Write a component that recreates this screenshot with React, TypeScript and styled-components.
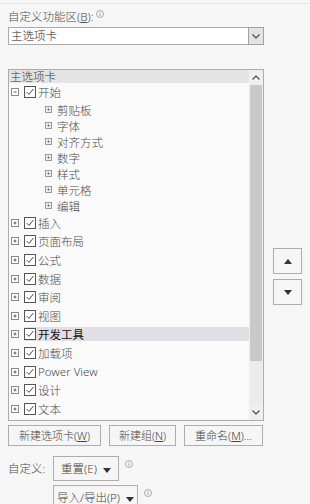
import React from "react";
import styled, { createGlobalStyle } from "styled-components";

const GlobalStyle = createGlobalStyle`
  html, body {
    margin: 0;
    padding: 0;
    background: #f6f6f6;
  }
  body {
    font-family: "Noto Sans", "Noto Sans CJK SC", sans-serif;
    font-size: 11.5px;
    font-weight: 300;
    color: #4a4a4a;
    overflow: hidden;
  }
`;

type TabItem = {
  name: string;
  open?: boolean;
  active?: boolean;
  children?: string[];
};

const tabs: TabItem[] = [
  {
    name: "开始",
    open: true,
    children: ["剪贴板", "字体", "对齐方式", "数字", "样式", "单元格", "编辑"],
  },
  { name: "插入" },
  { name: "页面布局" },
  { name: "公式" },
  { name: "数据" },
  { name: "审阅" },
  { name: "视图" },
  { name: "开发工具", active: true },
  { name: "加载项" },
  { name: "Power View" },
  { name: "设计" },
  { name: "文本" },
  { name: "排列" },
];

const InfoIcon = () => (
  <InfoSvg width="8" height="8" viewBox="0 0 8 8">
    <circle cx="4" cy="4" r="3.5" fill="none" stroke="#9a9a9a" strokeWidth="0.8" />
    <line x1="4" y1="3.4" x2="4" y2="6" stroke="#9a9a9a" strokeWidth="0.9" />
    <circle cx="4" cy="2.2" r="0.5" fill="#9a9a9a" />
  </InfoSvg>
);

const Expander = ({ open, small }: { open?: boolean; small?: boolean }) => (
  <ExpBox $small={small}>
    <svg width="100%" height="100%" viewBox="0 0 8 8">
      <line x1="2" y1="4" x2="6" y2="4" stroke={small ? "#555" : "#333"} strokeWidth="1" />
      {!open && <line x1="4" y1="2" x2="4" y2="6" stroke={small ? "#555" : "#333"} strokeWidth="1" />}
    </svg>
  </ExpBox>
);

const Check = () => (
  <CheckBox>
    <svg width="10" height="10" viewBox="0 0 10 10">
      <polyline points="1.8,5.2 4,7.4 8.4,2" fill="none" stroke="#333" strokeWidth="0.9" />
    </svg>
  </CheckBox>
);

const Caret = ({ up }: { up?: boolean }) => (
  <svg width="8" height="5" viewBox="0 0 8 5">
    <polygon points={up ? "0,5 8,5 4,0" : "0,0 8,0 4,5"} fill="#333" />
  </svg>
);

const Chevron = ({ up }: { up?: boolean }) => (
  <svg width="8" height="5" viewBox="0 0 8 5">
    <polyline points={up ? "0.5,4.5 4,1 7.5,4.5" : "0.5,0.5 4,4 7.5,0.5"} fill="none" stroke="#444" strokeWidth="1.1" />
  </svg>
);

const App = () => {
  return (
    <>
      <GlobalStyle />
      <Page>
        <Label>
          自定义功能区(<u>B</u>):<InfoIcon />
        </Label>
        <Select>
          <SelectText>主选项卡</SelectText>
          <SelectButton>
            <Chevron />
          </SelectButton>
        </Select>

        <ListRow>
          <ListBox>
            <ListContent>
              <Header>主选项卡</Header>
              {tabs.map((t) => (
                <React.Fragment key={t.name}>
                  <TabRow>
                    <Expander open={t.open} />
                    <TabLabel $active={t.active}>
                      <Check />
                      <TabText $active={t.active}>{t.name}</TabText>
                    </TabLabel>
                  </TabRow>
                  {t.open &&
                    t.children?.map((c) => (
                      <SubRow key={c}>
                        <Expander small />
                        <span>{c}</span>
                      </SubRow>
                    ))}
                </React.Fragment>
              ))}
            </ListContent>
            <ScrollBar>
              <ScrollArrow>
                <Chevron up />
              </ScrollArrow>
              <Thumb />
              <Track />
              <ScrollArrow>
                <Chevron />
              </ScrollArrow>
            </ScrollBar>
          </ListBox>
          <MoveButtons>
            <MoveButton>
              <Caret up />
            </MoveButton>
            <MoveButton>
              <Caret />
            </MoveButton>
          </MoveButtons>
        </ListRow>

        <ButtonRow>
          <Button $w={93}>新建选项卡(<u>W</u>)</Button>
          <Button $w={67}>新建组(<u>N</u>)</Button>
          <Button $w={79}>重命名(<u>M</u>)...</Button>
        </ButtonRow>

        <CustomRow>
          <CustomLabel>自定义:</CustomLabel>
          <Stack>
            <MenuLine>
              <MenuButton $w={66}>
                重置(E) <Caret />
              </MenuButton>
              <InfoIcon />
            </MenuLine>
            <MenuLine>
              <MenuButton $w={85}>
                导入/导出(P) <Caret />
              </MenuButton>
              <InfoIcon />
            </MenuLine>
          </Stack>
        </CustomRow>
      </Page>
    </>
  );
};

export default App;

const Page = styled.div`
  width: 310px;
  height: 504px;
  box-sizing: border-box;
  margin-top: 3px;
  border-top: 1px solid #e6e6e6;
  padding: 5px 0 0 8px;
  overflow: hidden;
`;

const Label = styled.div`
  display: flex;
  align-items: flex-start;
  height: 18px;
  line-height: 16px;
`;

const InfoSvg = styled.svg`
  margin-left: 2px;
  margin-top: 1px;
  flex: none;
`;

const Select = styled.div`
  width: 256px;
  height: 18px;
  box-sizing: border-box;
  border: 1px solid #ababab;
  background: #fff;
  display: flex;
  align-items: center;
`;

const SelectText = styled.div`
  flex: 1;
  padding-left: 2px;
  color: #222;
  line-height: 16px;
`;

const SelectButton = styled.div`
  width: 16px;
  height: 18px;
  margin: -1px -1px -1px 0;
  box-sizing: border-box;
  border: 1px solid #a0a0a0;
  background: #e3e3e3;
  display: flex;
  align-items: center;
  justify-content: center;
`;

const ListRow = styled.div`
  display: flex;
  margin-top: 24px;
`;

const ListBox = styled.div`
  width: 256px;
  height: 352px;
  box-sizing: border-box;
  border: 1px solid #ababab;
  background: #fafafa;
  display: flex;
  overflow: hidden;
`;

const ListContent = styled.div`
  flex: 1;
  overflow: hidden;
`;

const Header = styled.div`
  height: 13px;
  line-height: 13px;
  background: #e4e4e4;
  color: #333;
  padding-left: 1px;
`;

const TabRow = styled.div`
  height: 18.6px;
  display: flex;
  align-items: center;
  padding-left: 2px;
`;

const ExpBox = styled.div<{ $small?: boolean }>`
  width: ${(p) => (p.$small ? 7 : 8)}px;
  height: ${(p) => (p.$small ? 7 : 8)}px;
  box-sizing: border-box;
  border: 1px solid ${(p) => (p.$small ? "#9a9a9a" : "#8a8a8a")};
  background: ${(p) => (p.$small ? "#eee" : "#fff")};
  flex: none;
  display: flex;
`;

const TabLabel = styled.div<{ $active?: boolean }>`
  flex: 1;
  margin-left: 5px;
  height: 14px;
  display: flex;
  align-items: center;
  background: ${(p) => (p.$active ? "#e1dfe5" : "transparent")};
`;

const CheckBox = styled.div`
  width: 12px;
  height: 12px;
  box-sizing: border-box;
  border: 1px solid #555;
  background: #fff;
  display: flex;
  align-items: center;
  justify-content: center;
  flex: none;
`;

const TabText = styled.span<{ $active?: boolean }>`
  margin-left: 2px;
  color: ${(p) => (p.$active ? "#111" : "#4a4a4a")};
  font-weight: ${(p) => (p.$active ? 400 : 300)};
  white-space: nowrap;
`;

const SubRow = styled.div`
  height: 16px;
  display: flex;
  align-items: center;
  gap: 5px;
  padding-left: 36px;
`;

const ScrollBar = styled.div`
  width: 14px;
  display: flex;
  flex-direction: column;
  background: #efefef;
`;

const ScrollArrow = styled.div`
  height: 15px;
  display: flex;
  align-items: center;
  justify-content: center;
  flex: none;
`;

const Thumb = styled.div`
  height: 276px;
  margin: 0 1px;
  background: #c9c9c9;
  flex: none;
`;

const Track = styled.div`
  flex: 1;
  margin: 0 1px;
  background: #ebebeb;
`;

const MoveButtons = styled.div`
  display: flex;
  flex-direction: column;
  gap: 5px;
  margin-left: 9px;
  padding-top: 179px;
`;

const MoveButton = styled.div`
  width: 29px;
  height: 26px;
  box-sizing: border-box;
  border: 1px solid #acacac;
  background: #f6f6f6;
  display: flex;
  align-items: center;
  justify-content: center;
`;

const ButtonRow = styled.div`
  display: flex;
  gap: 8px;
  margin-top: 4px;
`;

const Button = styled.div<{ $w: number }>`
  width: ${(p) => p.$w}px;
  height: 21px;
  box-sizing: border-box;
  border: 1px solid #adadad;
  background: #f6f6f6;
  display: flex;
  align-items: center;
  justify-content: center;
  font-size: 11px;
  line-height: 14px;
  color: #444;
  white-space: nowrap;
`;

const CustomRow = styled.div`
  display: flex;
  margin-top: 10px;
`;

const CustomLabel = styled.div`
  width: 45px;
  padding-top: 4px;
`;

const Stack = styled.div`
  display: flex;
  flex-direction: column;
  gap: 4px;
`;

const MenuLine = styled.div`
  display: flex;
  align-items: flex-start;
  gap: 4px;
  svg:last-child {
    margin-top: 4px;
  }
`;

const MenuButton = styled.div<{ $w: number }>`
  width: ${(p) => p.$w}px;
  height: 25px;
  box-sizing: border-box;
  border: 1px solid #adadad;
  background: #f6f6f6;
  display: flex;
  align-items: center;
  justify-content: center;
  gap: 6px;
  line-height: 14px;
  color: #444;
  white-space: nowrap;
`;
